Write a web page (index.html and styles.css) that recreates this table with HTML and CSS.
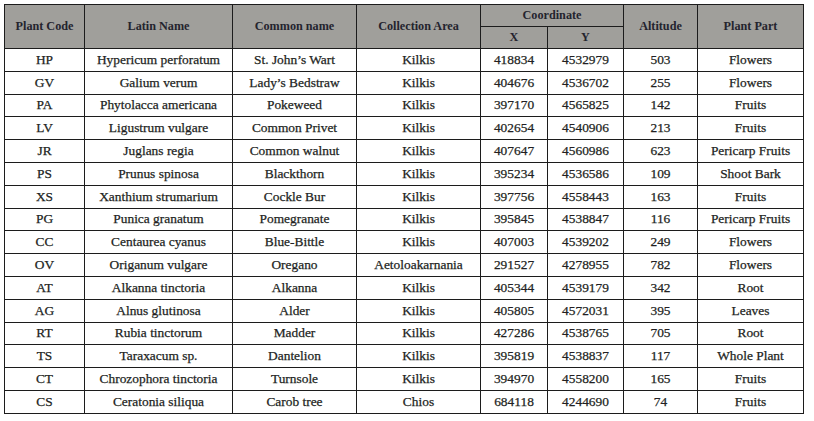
FILE: index.html
```html
<!DOCTYPE html>
<html>
<head>
<meta charset="utf-8">
<link rel="stylesheet" href="styles.css">
</head>
<body>
<table class="plants">
<colgroup>
<col class="c1"><col class="c2"><col class="c3"><col class="c4"><col class="c5"><col class="c6"><col class="c7"><col class="c8">
</colgroup>
<thead>
<tr class="h1">
<th rowspan="2">Plant Code</th>
<th rowspan="2">Latin Name</th>
<th rowspan="2">Common name</th>
<th rowspan="2">Collection Area</th>
<th colspan="2">Coordinate</th>
<th rowspan="2">Altitude</th>
<th rowspan="2">Plant Part</th>
</tr>
<tr class="h2"><th>X</th><th>Y</th></tr>
</thead>
<tbody>
<tr><td>HP</td><td>Hypericum perforatum</td><td>St. John’s Wart</td><td>Kilkis</td><td>418834</td><td>4532979</td><td>503</td><td>Flowers</td></tr>
<tr><td>GV</td><td>Galium verum</td><td>Lady’s Bedstraw</td><td>Kilkis</td><td>404676</td><td>4536702</td><td>255</td><td>Flowers</td></tr>
<tr><td>PA</td><td>Phytolacca americana</td><td>Pokeweed</td><td>Kilkis</td><td>397170</td><td>4565825</td><td>142</td><td>Fruits</td></tr>
<tr><td>LV</td><td>Ligustrum vulgare</td><td>Common Privet</td><td>Kilkis</td><td>402654</td><td>4540906</td><td>213</td><td>Fruits</td></tr>
<tr><td>JR</td><td>Juglans regia</td><td>Common walnut</td><td>Kilkis</td><td>407647</td><td>4560986</td><td>623</td><td>Pericarp Fruits</td></tr>
<tr><td>PS</td><td>Prunus spinosa</td><td>Blackthorn</td><td>Kilkis</td><td>395234</td><td>4536586</td><td>109</td><td>Shoot Bark</td></tr>
<tr><td>XS</td><td>Xanthium strumarium</td><td>Cockle Bur</td><td>Kilkis</td><td>397756</td><td>4558443</td><td>163</td><td>Fruits</td></tr>
<tr><td>PG</td><td>Punica granatum</td><td>Pomegranate</td><td>Kilkis</td><td>395845</td><td>4538847</td><td>116</td><td>Pericarp Fruits</td></tr>
<tr><td>CC</td><td>Centaurea cyanus</td><td>Blue-Bittle</td><td>Kilkis</td><td>407003</td><td>4539202</td><td>249</td><td>Flowers</td></tr>
<tr><td>OV</td><td>Origanum vulgare</td><td>Oregano</td><td>Aetoloakarnania</td><td>291527</td><td>4278955</td><td>782</td><td>Flowers</td></tr>
<tr><td>AT</td><td>Alkanna tinctoria</td><td>Alkanna</td><td>Kilkis</td><td>405344</td><td>4539179</td><td>342</td><td>Root</td></tr>
<tr><td>AG</td><td>Alnus glutinosa</td><td>Alder</td><td>Kilkis</td><td>405805</td><td>4572031</td><td>395</td><td>Leaves</td></tr>
<tr><td>RT</td><td>Rubia tinctorum</td><td>Madder</td><td>Kilkis</td><td>427286</td><td>4538765</td><td>705</td><td>Root</td></tr>
<tr><td>TS</td><td>Taraxacum sp.</td><td>Dantelion</td><td>Kilkis</td><td>395819</td><td>4538837</td><td>117</td><td>Whole Plant</td></tr>
<tr><td>CT</td><td>Chrozophora tinctoria</td><td>Turnsole</td><td>Kilkis</td><td>394970</td><td>4558200</td><td>165</td><td>Fruits</td></tr>
<tr><td>CS</td><td>Ceratonia siliqua</td><td>Carob tree</td><td>Chios</td><td>684118</td><td>4244690</td><td>74</td><td>Fruits</td></tr>
</tbody>
</table>
</body>
</html>
```

FILE: styles.css
```css
html, body {
  margin: 0;
  padding: 0;
  background: #ffffff;
}
body {
  padding: 4px 0 0 4px;
}
.plants {
  border-collapse: collapse;
  table-layout: fixed;
  width: 800px;
  font-family: "Liberation Serif", "Times New Roman", serif;
  font-size: 13.4px;
  color: #221f22;
}
.c1 { width: 80px; }
.c2 { width: 148px; }
.c3 { width: 124px; }
.c4 { width: 124px; }
.c5 { width: 67px; }
.c6 { width: 76px; }
.c7 { width: 74px; }
.c8 { width: 106px; }
.plants th,
.plants td {
  border: 1px solid #1c1c1c;
  text-align: center;
  vertical-align: middle;
  padding: 0;
  white-space: nowrap;
}
.plants td {
  -webkit-text-stroke: 0.25px #221f22;
}
.plants th {
  background: #a09f9b;
  font-weight: bold;
  font-size: 12.2px;
  color: #24242e;
  height: 21px;
}
.plants tbody tr {
  height: 22.8px;
}
```
